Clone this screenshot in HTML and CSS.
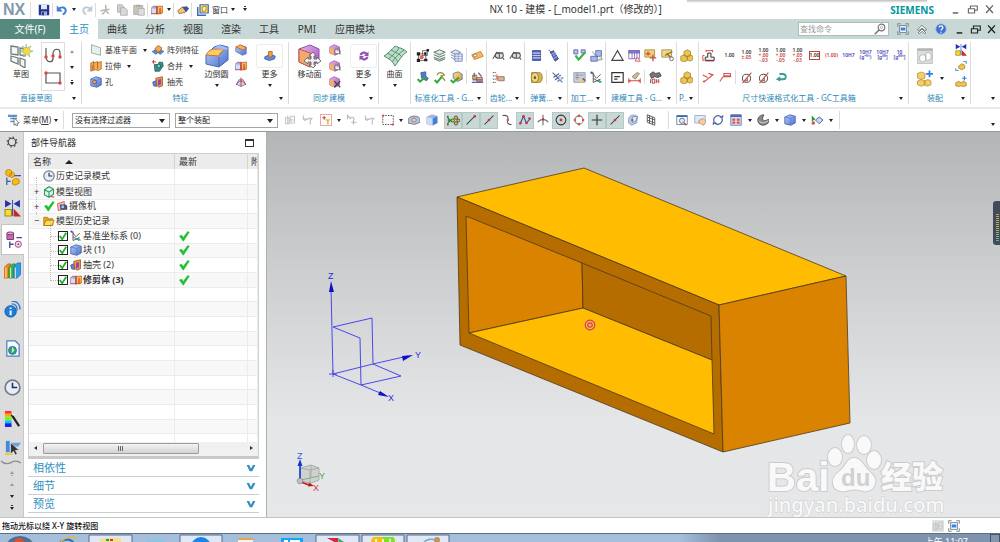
FILE: index.html
```html
<!DOCTYPE html>
<html lang="zh-CN">
<head>
<meta charset="utf-8">
<title>NX 10 - 建模</title>
<link rel="stylesheet" href="styles.css">
</head>
<body>
<svg class="sprite" aria-hidden="true">
  <defs>
    <linearGradient id="gb" x1="0" y1="0" x2="1" y2="1"><stop offset="0" stop-color="#b9d0f7"/><stop offset="1" stop-color="#4a6fd0"/></linearGradient>
    <linearGradient id="go" x1="0" y1="0" x2="1" y2="1"><stop offset="0" stop-color="#ffe08a"/><stop offset="1" stop-color="#e2902a"/></linearGradient>
    <linearGradient id="gp" x1="0" y1="0" x2="1" y2="1"><stop offset="0" stop-color="#e4b8ee"/><stop offset="1" stop-color="#a54fc0"/></linearGradient>
  </defs>
  <symbol id="save" viewBox="0 0 16 16"><path d="M1 1h13l1 1v13H1z" fill="#27348b"/><path d="M4 1h8v6H4z" fill="#dfe9f8"/><path d="M4 10h8v5H4z" fill="#9db4df"/><path d="M5 11h3v4H5z" fill="#27348b"/></symbol>
  <symbol id="undo" viewBox="0 0 16 16"><path d="M3 7c4-4 10-3 10 2 0 3-2 4-4 5" fill="none" stroke="#3f7fd0" stroke-width="2.6"/><path d="M1 2v8h8z" fill="#3f7fd0"/></symbol>
  <symbol id="redo" viewBox="0 0 16 16"><path d="M13 7C9 3 3 4 3 9c0 3 2 4 4 5" fill="none" stroke="#bccbd6" stroke-width="2.4"/><path d="M15 2v8H7z" fill="#bccbd6"/></symbol>
  <symbol id="cut" viewBox="0 0 16 16"><path d="M9 1v9M2 9l12-2M8 10l-4 4M9 9l4 4" fill="none" stroke="#b9b6ae" stroke-width="2"/></symbol>
  <symbol id="copy" viewBox="0 0 16 16"><path d="M2 1h6l2 2v8H2z" fill="#cfcfd2" stroke="#aaa"/><path d="M6 5h6l3 3v7H6z" fill="#d9d9dc" stroke="#a5a5a8"/></symbol>
  <symbol id="paste" viewBox="0 0 16 16"><path d="M1 2h12v12H1z" fill="#c9c4b6" stroke="#aaa698"/><path d="M4 1h6v3H4z" fill="#aaa"/><path d="M7 6h8v9H7z" fill="#ddd" stroke="#aaa"/></symbol>
  <symbol id="trim" viewBox="0 0 16 16"><path d="M0 6l3-3h6v10H0z" fill="url(#gb)" stroke="#d2453a"/><path d="M1 6h6v6H1z" fill="#cfe0fb"/><path d="M8 6l2-3h6v8l-2 2H8z" fill="url(#go)" stroke="#b05a1e"/><path d="M8 3v11M12 5v8" stroke="#d22a1e" stroke-width="1.300" fill="none"/></symbol>
  <symbol id="touch" viewBox="0 0 16 16"><path d="M1 9l6-5 8 2-4 5-8 2z" fill="#f4c27e" stroke="#8c5a2a"/><path d="M7 4l6-1 3 3-4 5z" fill="#3e5695"/></symbol>
  <symbol id="win" viewBox="0 0 16 16"><path d="M1 4v11h11" fill="none" stroke="#456ab5" stroke-width="2"/><path d="M4 1h11v11H4z" fill="#f6dc62" stroke="#3b6dca" stroke-width="1.6"/><path d="M7 4l5-1v6l-5 1z" fill="#fff3b2" stroke="#a67711"/></symbol>
  <symbol id="min" viewBox="0 0 16 16"><path d="M4 13h8" stroke="currentColor" stroke-width="2.2"/></symbol>
  <symbol id="res" viewBox="0 0 16 16"><path d="M5 7V3h10v6h-4M2 7h9v6H2z" fill="none" stroke="currentColor" stroke-width="1.6"/></symbol>
  <symbol id="cls" viewBox="0 0 16 16"><path d="M3 2l10 11M13 2L3 13" stroke="currentColor" stroke-width="2"/></symbol>
  <symbol id="mag" viewBox="0 0 16 16"><circle cx="10" cy="6" r="4.4" fill="none" stroke="#777" stroke-width="1.6"/><circle cx="10" cy="6" r="1.6" fill="none" stroke="#999"/><path d="M7 9l-6 6" stroke="#777" stroke-width="2.2"/></symbol>
  <symbol id="full" viewBox="0 0 16 16"><path d="M1 5V1h4M11 1h4v4M15 11v4h-4M5 15H1v-4" fill="none" stroke="#808a90" stroke-width="1.4"/><path d="M3.500 3.500h9v9h-9z" fill="#fff" stroke="#52606b"/><path d="M5 6h6v4H5z" fill="#2d83e6"/></symbol>
  <symbol id="up" viewBox="0 0 16 16"><path d="M2 9l6-6 6 6-2 1-4-3-4 3zM3 13l5-5 5 5-2 1-3-3-3 3z" fill="#fff" stroke="#555"/></symbol>
  <symbol id="help" viewBox="0 0 16 16"><circle cx="8" cy="8" r="7" fill="#3f70cf" stroke="#a9bde7"/><path d="M5.500 6c0-3 5-3 5 0 0 2-2.500 2-2.500 4M8 11.500v1.500" fill="none" stroke="#fff" stroke-width="1.700"/></symbol>
  <symbol id="sketch" viewBox="0 0 24 24"><path d="M2 2l7 1v8l-7-1zM11 4l5 1v7l-5-1zM2 12l7 2v6l-7-3zM11 14l5 2v8l-5-3z" fill="#f4f6f6" stroke="#707a7a" stroke-width="1.300"/><path d="M17 0l1 4 4-2-2 4 4 1-4 2 1 4-4-3-3 3 1-4-4-2 4-1-2-4 4 2z" fill="#f8d93a" stroke="#6fa6a0" stroke-width=".5"/></symbol>
  <symbol id="prof" viewBox="0 0 18 18"><path d="M2 2v8c0 7 6 7 7 3V7c1-5 7-5 7 0v4" fill="none" stroke="#555" stroke-width="1.200"/><g fill="#e04545"><circle cx="2" cy="11" r="1.700"/><circle cx="9" cy="10" r="1.700"/><circle cx="16" cy="11" r="1.700"/></g></symbol>
  <symbol id="rect" viewBox="0 0 18 18"><path d="M2 4h14v10H2z" fill="none" stroke="#555" stroke-width="1.200"/><circle cx="2" cy="4" r="1.700" fill="#e04545"/><circle cx="16" cy="14" r="1.700" fill="#e04545"/></symbol>
  <symbol id="plane" viewBox="0 0 16 16"><path d="M2 1l12 4v10L2 12z" fill="#e6efe9" stroke="#8a9a95"/></symbol>
  <symbol id="extr" viewBox="0 0 16 16"><path d="M1 4l4-2v2l5-2v2l5-2v10l-4 2-4-1-6 2z" fill="#f3b04c" stroke="#a5602a"/><path d="M5 3v10M10 3v9M3 7v6" stroke="#b34b36" fill="none"/></symbol>
  <symbol id="cube" viewBox="0 0 16 16"><path d="M1 4l7-3 7 2v9l-6 3-8-2z" fill="url(#gb)" stroke="#3c58aa"/><path d="M1 4l8 2 6-3M9 6v9" stroke="#5a7ad0" fill="none"/></symbol>
  <symbol id="hole" viewBox="0 0 16 16"><use href="#cube"/><circle cx="6" cy="8" r="2.600" fill="#f3a64c" stroke="#4d3f82"/></symbol>
  <symbol id="patt" viewBox="0 0 16 16"><path d="M0 10l5-3 5 3-5 4zM6 10l5-3 5 3-5 4z" fill="#5d86d8" stroke="#395a9e" stroke-width=".6"/><path d="M4 6l4-4 5 3-2 5-4 1z" fill="#f3a745" stroke="#9e5a22"/></symbol>
  <symbol id="unite" viewBox="0 0 16 16"><path d="M3 6h6V3h5l1 5-5 7H4z" fill="#3d8d86" stroke="#1e5f5b"/><circle cx="9" cy="8" r="2.600" fill="#7cc8bf" stroke="#17504c"/><path d="M2 0v5M0 2.500h5" stroke="#d84d46" stroke-width="1.500"/></symbol>
  <symbol id="shell" viewBox="0 0 16 16"><path d="M1 8l5-2v8l-4-1z" fill="#5d86d8" stroke="#34529c"/><path d="M5 3l9-2v12l-5 2-3-3z" fill="#f19a45" stroke="#9b4a22"/><path d="M8 5l4-1v7l-4 2z" fill="#8d4bb0"/></symbol>
  <symbol id="edge" viewBox="0 0 24 24"><path d="M1 11l8-8 6-2 8 2v13l-9 7-13-3z" fill="url(#gb)" stroke="#4a68b5"/><path d="M1 11c2-4 5-6 9-6l12 0c-4 1-7 3-8 7z" fill="#f6cf5e" stroke="#d86d3c"/><path d="M9 4l5-3 9 3-1 2z" fill="#9dbbf4"/><path d="M14 13v10" stroke="#4a68b5"/></symbol>
  <symbol id="chamf" viewBox="0 0 16 16"><path d="M1 5l7-3 7 2v9l-5 2-9-5z" fill="url(#gb)" stroke="#6473b8"/><path d="M1 4l6-3 8 4-4 3z" fill="#f4b552" stroke="#c84f33"/></symbol>
  <symbol id="draft" viewBox="0 0 16 16"><path d="M2 11l3-6h6l3 6-6 3z" fill="#cad8f2" stroke="#5570b3"/><path d="M8 2v12M2 12c2-7 10-7 12 0" fill="none" stroke="#d23b31" stroke-width="1.300"/></symbol>
  <symbol id="more" viewBox="0 0 16 16"><path d="M1 9l7-3 7 2-1 4-7 2-6-2z" fill="#5d8ae0" stroke="#3858a5"/><path d="M6 2h5v6l-3 2-2-2z" fill="#f0a140" stroke="#ad5b1d"/></symbol>
  <symbol id="move" viewBox="0 0 24 24"><path d="M1 5l11-4 9 4v12l-9 6-11-5z" fill="url(#gp)" stroke="#9050a5"/><path d="M1 5l11 4v14L1 18z" fill="#f3a96b" stroke="#c45a48"/><path d="M15 8l3 4h-2v3h3v-2l4 4-4 3v-2h-3v3h2l-3 3-4-3h2v-3h-3v2l-4-3 4-4v2h3v-3h-2z" fill="#f1f2f1" stroke="#626666" stroke-width=".9"/></symbol>
  <symbol id="syn" viewBox="0 0 16 16"><path d="M1 4l6-3 7 3v8l-6 3-7-3z" fill="url(#gp)" stroke="#a55ca9"/><path d="M1 4l6 3v8l-6-3z" fill="#f0b070"/><path d="M8 7h6v6H8z" fill="#fff" stroke="#555"/><path d="M10 9h5v5" fill="none" stroke="#777"/></symbol>
  <symbol id="syn2" viewBox="0 0 16 16"><path d="M1 4l6-3 7 3v8l-6 3-7-3z" fill="url(#gp)" stroke="#a55ca9"/><path d="M1 4l6 3v8l-6-3z" fill="#f0b070"/><path d="M7 7l8 8M15 7l-8 8" stroke="#444" stroke-width="1.500"/></symbol>
  <symbol id="cyc" viewBox="0 0 16 16"><path d="M2 7c1-6 8-6 10-3l2-2v6H8l2-2C8 4 6 5 5 7zM14 9c-1 6-8 6-10 3l-2 2V8h6l-2 2c2 2 4 1 5-1z" fill="#9254b0"/></symbol>
  <symbol id="surf" viewBox="0 0 24 24"><path d="M1 12C6 9 9 5 12 2c4 2 8 2 12 6-4 2-7 7-12 14-2-5-6-7-11-10z" fill="#b9dec8" stroke="#588a70"/><path d="M4 9c5 2 9 5 11 9M8 6c4 2 9 4 11 7M5 15c4-3 9-7 11-11M9 18c3-4 7-9 12-12" fill="none" stroke="#588a70" stroke-width=".9"/></symbol>
  <symbol id="nodes" viewBox="0 0 16 16"><path d="M3 6h9v8H3zM8 2h6v6H8z" fill="none" stroke="#555"/><g fill="#222"><path d="M1 4h4v4H1zM10 4h3v3h-3zM1 12h4v4H1zM10 12h4v3h-4zM13 0h3v3h-3z"/></g><circle cx="7" cy="10" r="2.500" fill="#e8654b"/></symbol>
  <symbol id="layers" viewBox="0 0 16 16"><path d="M1 4l7-3 7 3-7 3zM1 7l7 3 7-3M1 10l7 3 7-3M1 12l7 3 7-3" fill="#dcebe2" stroke="#5f7468" stroke-width="1.200"/></symbol>
  <symbol id="sheet" viewBox="0 0 16 16"><path d="M1 4l6-3 6 3-6 3zM1 7l6 3M1 10l5 3" fill="#dbe6ee" stroke="#65778e"/><path d="M6 6h9v9H6z" fill="#e9effb" stroke="#6277ba"/><path d="M6 9h9M6 12h9M10 6v9" stroke="#8a9cd0"/></symbol>
  <symbol id="tag" viewBox="0 0 16 16"><path d="M1 7l11-4 3 6-11 4z" fill="#f5b85b" stroke="#c27528"/><circle cx="5" cy="8" r="1.800" fill="#fff" stroke="#777"/></symbol>
  <symbol id="chk3" viewBox="0 0 16 16"><path d="M6 2l6-1v5l3 3-2 3-6-3z" fill="#4e79d1" stroke="#34569c"/><path d="M2 10l3 3 7-6" fill="none" stroke="#35aa3e" stroke-width="2.600"/></symbol>
  <symbol id="chk4" viewBox="0 0 16 16"><path d="M5 5c2-5 7-3 9 0l-4 1 5 6" fill="none" stroke="#9a9030" stroke-width="1.500"/><path d="M2 11l3 3 6-7" fill="none" stroke="#35aa3e" stroke-width="2.600"/></symbol>
  <symbol id="chk5" viewBox="0 0 16 16"><path d="M4 3l6-2 5 3v6l-6 3-5-4z" fill="url(#go)" stroke="#4c6fb8"/><path d="M1 11l3 3 7-6" fill="none" stroke="#35aa3e" stroke-width="2.600"/></symbol>
  <symbol id="stamp" viewBox="0 0 16 16"><path d="M2 5h5v5H2zM7 8h7v5H7z" fill="#f0b04d" stroke="#8b6a48"/><path d="M4 2v5M9 2l4 5M1 14h14M2 11h12" stroke="#6a5bb0" stroke-width="1.600"/></symbol>
  <symbol id="gear" viewBox="0 0 16 16"><ellipse cx="9" cy="8" rx="5" ry="3.500" fill="#ddd" stroke="#555" stroke-width="1.300"/><path d="M1 12l5-8 3 2M5 5h9M13 11l2 2M9 6v5" stroke="#555" fill="none" stroke-width="1.300"/></symbol>
  <symbol id="gearl" viewBox="0 0 16 16"><path d="M1 2h4M1 6h4M1 10h4M1 14h4" stroke="#333" stroke-dasharray="2 1"/><path d="M6 7h9v5H8z" fill="#d7b592" stroke="#896b59"/><path d="M6 4v8" stroke="#d44"/></symbol>
  <symbol id="spr" viewBox="0 0 16 16"><path d="M3 2h10v12H3z" fill="#5264bf" stroke="#303c80"/><path d="M3 5h10M3 8h10M3 11h10" stroke="#c2c9f1" stroke-width="1.500"/></symbol>
  <symbol id="spr2" viewBox="0 0 16 16"><path d="M2 1l3 3" stroke="#333"/><path d="M4 4l4-2 6 10-4 3z" fill="#5665ba" stroke="#303c80"/><path d="M5 7l5-3M7 9l4-3M8 12l5-3" stroke="#c2c9f1"/></symbol>
  <symbol id="disc" viewBox="0 0 16 16"><path d="M2 2h10c4 1 4 11 0 12H2z" fill="#d9b84a" stroke="#92731b"/><ellipse cx="6" cy="8" rx="4.500" ry="6" fill="#ecd787" stroke="#92731b"/><ellipse cx="6" cy="8" rx="1.500" ry="2" fill="#6f5b22"/></symbol>
  <symbol id="spr3" viewBox="0 0 16 16"><path d="M2 2l12 12M3 8l7-5M5 11l7-6M8 13l7-5" stroke="#5a6ba5" stroke-width="1.500"/><path d="M9 6l5 2-3 4z" fill="#d9d9ef"/></symbol>
  <symbol id="v" viewBox="0 0 16 16"><path d="M1 1h5v5H1zM10 1h5v4h-5z" fill="#b8c0ec" stroke="#5360b5"/><path d="M3 8l4 5 8-9" fill="none" stroke="#3ab24a" stroke-width="2.600"/></symbol>
  <symbol id="cfg" viewBox="0 0 16 16"><path d="M7 2h7v7H7zM1 9h8v6H1z" fill="#aab8e8" stroke="#5161aa"/><path d="M3 3l4 6M13 8l2 5-6 1" stroke="#888" fill="#dedede"/></symbol>
  <symbol id="map" viewBox="0 0 16 16"><path d="M1 2h14v12H1z" fill="#c8cede" stroke="#939bab"/><path d="M3 5h10M3 8h5M5 2v9" stroke="#8791a5"/><path d="M8 8l6 1-2 5-6-1z" fill="#e9cc7c"/><path d="M12 9l3 3" stroke="#5a57c5" stroke-width="2"/></symbol>
  <symbol id="csys" viewBox="0 0 16 16"><path d="M4 14V2M4 14l9-4M4 9l8 5M3 3l5 6 5-5" fill="none" stroke="#555" stroke-width="1.200"/><path d="M10 11l4 3" stroke="#2a9" stroke-width="2"/><circle cx="2" cy="2" r="1.500" fill="#44c"/></symbol>
  <symbol id="tri" viewBox="0 0 16 16"><path d="M8 2l7 12H1z" fill="none" stroke="#444" stroke-width="1.300"/></symbol>
  <symbol id="tbl" viewBox="0 0 16 16"><path d="M1 2h13v10H1z" fill="#fff" stroke="#7260b8"/><path d="M1 2h13v3H1zM5 5v7M8 5v7M11 5v7" fill="#8d78ca" stroke="#7260b8"/><path d="M11 10l4 5H9z" fill="#fff" stroke="#d44"/></symbol>
  <symbol id="note" viewBox="0 0 16 16"><path d="M1 1h12v9H1z" fill="#f0d077" stroke="#a38842"/><path d="M5 3v5M2 6h6M11 7v8M7 11h8" stroke="#c94e3c" stroke-width="1.600"/></symbol>
  <symbol id="note2" viewBox="0 0 16 16"><path d="M1 1h12v9H1z" fill="#efd887" stroke="#a38842"/><path d="M5 8l9-5M7 5l6 7" stroke="#876e36" stroke-width="1.500"/><circle cx="13" cy="12" r="2.300" fill="#fff" stroke="#555"/></symbol>
  <symbol id="box" viewBox="0 0 16 16"><path d="M1 2h14v12H1z" fill="none" stroke="#333" stroke-width="1.400"/><path d="M4 7h7M4 10h4" stroke="#333" stroke-width="1.500"/></symbol>
  <symbol id="dimx" viewBox="0 0 16 16"><path d="M1 9v6M15 9v6M1 12h14M3 11l-2 1 2 1M13 11l2 1-2 1" fill="none" stroke="#d0453f" stroke-width="1.200"/><path d="M5 7l6-5 3 1-5 7z" fill="#d7c275" stroke="#777"/></symbol>
  <symbol id="h7" viewBox="0 0 16 16"><path d="M1 4l4-3 3 2 5-1 2 4-4 2-4-1-4 2z" fill="#777" stroke="#444"/><path d="M2 10v5M4 10h3v5H4zM9 10v5M12 10v5M9 12.500h3" stroke="#b04543" fill="none" stroke-width="1.200"/></symbol>
  <symbol id="gold" viewBox="0 0 16 16"><path d="M5 3l4-2 4 2v5l-4 2-4-2zM1 9l4-2 4 2v5l-4 2-4-2zM9 9l3-2 4 2v4l-4 2-3-2z" fill="#edc652" stroke="#ab842b"/></symbol>
  <symbol id="addc" viewBox="0 0 24 24"><path d="M2 6l5-2 5 2v6l-5 2-5-2zM2 16l5-2 5 2v5l-5 2-5-2zM11 16l5-2 4 2v5l-5 2-4-2z" fill="#f2cf67" stroke="#b68e33"/><path d="M18 2v9M13.500 6.500h9" stroke="#2f7be0" stroke-width="2.300"/></symbol>
  <symbol id="fade" viewBox="0 0 24 24"><path d="M2 2h20v20H2z" fill="#dcdedd" stroke="#b6baba"/><path d="M2 4h20" stroke="#aaa" stroke-width="2"/><path d="M5 12l4-2 4 2v6l-4 2-4-2zM13 9l3-2 4 2v7l-4 2-3-1z" fill="#fff" stroke="#a5a9a9"/></symbol>
  <symbol id="mirr" viewBox="0 0 16 16"><path d="M1 0l6 3.500L1 7zM15 0L9 3.500 15 7z" fill="#2733a8"/><path d="M1 9h6v6H1z" fill="#f4dd35" stroke="#9f8b12"/><path d="M9 8l7 7.500H9z" fill="#c92b22"/><path d="M8 0v15" stroke="#2b5bbd"/></symbol>
  <symbol id="gmov" viewBox="0 0 16 16"><path d="M5 8l4-3 4 2v4l-4 2-4-2z" fill="#efc350" stroke="#a67f26"/><path d="M11 2h4v3M1 11v3h4" fill="none" stroke="#5c93e5" stroke-width="1.500"/></symbol>
  <symbol id="gadd" viewBox="0 0 16 16"><path d="M1 9l4-2 3 2 3-2 4 2v4l-4 1-3-1-3 1-4-1z" fill="#efc350" stroke="#a67f26"/><path d="M12.500 0v6M9.500 3h6" stroke="#2f7be0" stroke-width="1.500"/></symbol>
  <symbol id="dstep" viewBox="0 0 16 16"><path d="M7 5h4v5h4v4H4v-4h3z" fill="#eee" stroke="#333" stroke-width="1.200"/><path d="M5 1v3M13 1v3M5 2h8M1 8v6M1 8h2M1 14h2M4 16h11" stroke="#d44" stroke-width="1.200"/></symbol>
  <symbol id="dred" viewBox="0 0 16 16"><path d="M2 14L14 4M1 5l6 3M8 3l6 2M4 12l-3 1" stroke="#cf5750" stroke-width="1.500"/></symbol>
  <symbol id="dred2" viewBox="0 0 16 16"><path d="M1 13l4-6h10M6 3h8v3H6z" fill="none" stroke="#cf5750" stroke-width="1.300"/></symbol>
  <symbol id="dia" viewBox="0 0 16 16"><circle cx="8" cy="9" r="5" fill="none" stroke="#444" stroke-width="1.200"/><path d="M3 15L14 2M5 12h4v-3" stroke="#c54848" stroke-width="1.300" fill="none"/></symbol>
  <symbol id="ret" viewBox="0 0 16 16"><path d="M6 4h5c5 1 4 7 0 7H6" fill="none" stroke="#3e9b93" stroke-width="2.400"/><path d="M7 7v7l-6-3z" fill="#3e9b93"/></symbol>
  <symbol id="menu" viewBox="0 0 16 16"><path d="M0 1h12v3H0zM3 5h9v2H3zM3 9h6v2H3z" fill="#5e90d0"/><path d="M8 5l7 7-3 .5 1 3-2 .5-1-3-2 2z" fill="#fff" stroke="#555"/></symbol>
  <symbol id="gh1" viewBox="0 0 16 16"><path d="M2 5h5v8H2zM5 2v12M9 3h5v9H9zM7 8h6" fill="none" stroke="#c4c8c8" stroke-width="1.500"/></symbol>
  <symbol id="gh2" viewBox="0 0 16 16"><path d="M2 2v5h6M8 6l5 0-2 3v5M3 9l3-2" fill="none" stroke="#bfc4c4" stroke-width="1.700"/></symbol>
  <symbol id="flt" viewBox="0 0 16 16"><path d="M0.500 0.500h15v15H.5z" fill="#fff" stroke="#e07a73"/><path d="M3 5h5M5.500 2.500v5" stroke="#d4463f" stroke-width="1.500"/><path d="M7 7h7l-2.500 3v4h-2v-4z" fill="#e9b74a"/></symbol>
  <symbol id="gh3" viewBox="0 0 16 16"><path d="M2 7V2l4 4c3-4 6 0 4 3M10 8v6M7 11h7" fill="none" stroke="#b7bcbc" stroke-width="1.600"/></symbol>
  <symbol id="dash" viewBox="0 0 16 16"><path d="M1 2h14v12H1z" fill="none" stroke="#444" stroke-dasharray="2 1.500" stroke-width="1.200"/><circle cx="1.500" cy="2" r="1.500" fill="#d44"/><circle cx="14.500" cy="14" r="1.500" fill="#d44"/></symbol>
  <symbol id="shade" viewBox="0 0 16 16"><path d="M0 8c1-6 12-7 16-2v5l-7 3-9-2z" fill="#b9c1d5" stroke="#59657e"/><ellipse cx="8" cy="8" rx="3" ry="2.500" fill="#e6d0d0" stroke="#906a6a"/></symbol>
  <symbol id="bcube" viewBox="0 0 16 16"><path d="M1 4l7-3 7 2v9l-6 3-8-2z" fill="#8bbcf3" stroke="#e48a93" stroke-width=".8"/><path d="M1 4l8 2v9l-8-2z" fill="#c3dffb"/><path d="M9 6l6-3v9l-6 3z" fill="#4281db"/></symbol>
  <symbol id="snap" viewBox="0 0 16 16"><path d="M0 2h2v3H0zM0 11h2v3H0z" fill="#d33"/><path d="M1 4l5 4-5 4z" fill="#19a03a"/><g fill="#e8cf3c" stroke="#333" stroke-width="1"><circle cx="7" cy="8" r="2"/><circle cx="11" cy="4.500" r="2"/><circle cx="11" cy="11.500" r="2"/><circle cx="14" cy="8" r="1.700"/></g></symbol>
  <symbol id="ln1" viewBox="0 0 16 16"><path d="M2 14L13 3" stroke="#333" stroke-width="1.400"/><circle cx="13" cy="3" r="1.800" fill="#c33"/></symbol>
  <symbol id="ln2" viewBox="0 0 16 16"><path d="M2 14L14 2" stroke="#333" stroke-width="1.400"/><circle cx="8" cy="8" r="1.800" fill="#c33"/></symbol>
  <symbol id="crv" viewBox="0 0 16 16"><path d="M2 2c7-1 8 2 7 6s0 6 5 6" fill="none" stroke="#555" stroke-width="1.400"/><circle cx="9" cy="8" r="1.600" fill="#c55"/></symbol>
  <symbol id="zig" viewBox="0 0 16 16"><path d="M1 14l5-11 4 9 5-6" fill="none" stroke="#4542a5" stroke-width="1.500"/><g fill="#c33"><circle cx="2" cy="12" r="1.800"/><circle cx="6" cy="3" r="1.800"/><circle cx="10" cy="12" r="1.800"/><circle cx="14" cy="6" r="1.800"/></g></symbol>
  <symbol id="int" viewBox="0 0 16 16"><path d="M8 1v14M1 11c3-5 11-5 14 0" fill="none" stroke="#666" stroke-width="1.400"/><circle cx="8" cy="7" r="1.600" fill="#c33"/></symbol>
  <symbol id="cen" viewBox="0 0 16 16"><circle cx="8" cy="8" r="6.500" fill="none" stroke="#333" stroke-width="1.400"/><circle cx="8" cy="8" r="1.900" fill="#c33"/></symbol>
  <symbol id="quad" viewBox="0 0 16 16"><circle cx="8" cy="8" r="5.500" fill="none" stroke="#888" stroke-width="1.400"/><g fill="#d35454"><circle cx="8" cy="2.500" r="1.700"/><circle cx="8" cy="13.500" r="1.700"/><circle cx="2.500" cy="8" r="1.700"/><circle cx="13.500" cy="8" r="1.700"/></g></symbol>
  <symbol id="plus" viewBox="0 0 16 16"><path d="M8 1v14M1 8h14" stroke="#333" stroke-width="1.500"/></symbol>
  <symbol id="ball" viewBox="0 0 16 16"><path d="M2 7c1-7 10-7 12-3l-1 8-7 3-4-3z" fill="#b2cdf0" stroke="#7895c0"/><path d="M7 4l7-1-3 7-4 1z" fill="#e7eef9" stroke="#6a7da5"/><circle cx="7" cy="8" r="1.500" fill="#c33"/></symbol>
  <symbol id="grid" viewBox="0 0 16 16"><path d="M3 1l10 4v10L3 11zM6 2v11M10 4v10M3 4l10 4M3 8l10 4" fill="none" stroke="#555" stroke-width="1.200"/></symbol>
  <symbol id="fit" viewBox="0 0 16 16"><path d="M1 2h14v12H1z" fill="#fff" stroke="#4a69ae"/><path d="M1 2h14v2H1z" fill="#3f66b4"/><circle cx="8" cy="9" r="3.500" fill="#d8e6fb" stroke="#555"/><path d="M11 12l3 3" stroke="#b45d35" stroke-width="2"/></symbol>
  <symbol id="hand" viewBox="0 0 16 16"><path d="M1 2h14v10H1z" fill="#dee9f9" stroke="#8da0c8"/><path d="M6 9l6-3 4 4-3 5-6-3z" fill="#f4cda2" stroke="#bb8a58"/></symbol>
  <symbol id="rot" viewBox="0 0 16 16"><path d="M3 11C0 4 8 0 12 4M13 5c3 7-5 11-9 7" fill="none" stroke="#4c61a8" stroke-width="1.600"/><path d="M10 5h5V1zM6 11H1v4z" fill="#4c61a8"/></symbol>
  <symbol id="lay" viewBox="0 0 16 16"><path d="M1 1h14v14H1z" fill="#d9e2f5" stroke="#4a69ae"/><path d="M1 1h14v3H1z" fill="#4a69ae"/><path d="M3 6h4v3H3zM9 6h4v3H9zM3 10h4v3H3zM9 10h4v3H9z" fill="#dc5a4e"/></symbol>
  <symbol id="wing" viewBox="0 0 16 16"><path d="M1 8c0-4 4-7 8-7L7 7l3 2 6-2v3c-1 3-5 5-8 5-4 0-7-3-7-7z" fill="#888" stroke="#444"/><path d="M3 9c1 3 6 4 12 0" fill="none" stroke="#ddd" stroke-width="1.200"/></symbol>
  <symbol id="play" viewBox="0 0 16 16"><path d="M1 2l5 5-5 3z" fill="#1e9d45"/><path d="M1 10h4v4H1z" fill="#d44"/><path d="M6 8l5-4 5 4-5 5z" fill="#cfd6f0" stroke="#5664a5" stroke-width="1.300"/></symbol>
  <symbol id="cog" viewBox="0 0 16 16"><circle cx="8" cy="8" r="5" fill="none" stroke="#444" stroke-width="1.600"/><circle cx="8" cy="8" r="6.500" fill="none" stroke="#444" stroke-width="1.500" stroke-dasharray="2 3.100"/></symbol>
  <symbol id="asm" viewBox="0 0 18 18"><path d="M2 2l3-2 3 2v4L5 8 2 6zM6 5l3-2 2 2v3L8 9 6 8zM9 12l3-2 4 1v4l-4 2-3-1z" fill="#f8bb18" stroke="#c28908"/><path d="M3 9v8M3 13h4M11 7h7" stroke="#3f55a5" stroke-width="1.300"/></symbol>
  <symbol id="nav" viewBox="0 0 18 18"><path d="M1 2h7v7H1z" fill="#c06aae" stroke="#7e3474"/><ellipse cx="4.500" cy="2.500" rx="3.500" ry="1.500" fill="#e3a9d8" stroke="#7e3474"/><path d="M11 7h6M4 11v7M4 14h4" stroke="#4b4b9b" stroke-width="1.400"/><circle cx="13" cy="14" r="3.300" fill="#f4dcee" stroke="#9c4080"/><circle cx="13" cy="14" r="1" fill="#9c4080"/></symbol>
  <symbol id="books" viewBox="0 0 18 18"><path d="M0 6l4-4h3v11l-3 4H0z" fill="#f08a1b" stroke="#a95a0e" stroke-width=".7"/><path d="M5 6l4-4h3v11l-3 4H5z" fill="#36b64c" stroke="#1b7c2c" stroke-width=".7"/><path d="M10 6l4-5h4v12l-4 4h-4z" fill="#2f9be0" stroke="#1c669b" stroke-width=".7"/><path d="M2 6v11M7 6v11M12 6v11" stroke="#ffe9b5"/></symbol>
  <symbol id="info" viewBox="0 0 18 18"><circle cx="7" cy="11" r="6" fill="#1c7fda" stroke="#0e56a0"/><path d="M7 10v5M7 7v1.500" stroke="#fff" stroke-width="2"/><path d="M8 3c4 0 6 3 6 7M8 0c6 0 9 4 9 9" fill="none" stroke="#3575c8" stroke-width="1.500"/></symbol>
  <symbol id="html" viewBox="0 0 18 18"><path d="M3 1h9l4 4v12H3z" fill="#f7faff" stroke="#4e7fc6" stroke-width="1.300"/><circle cx="9" cy="11" r="4.200" fill="#39a94a" stroke="#1d70c1"/><path d="M9 7l2 4-3 3z" fill="#bfe6ff"/></symbol>
  <symbol id="clock" viewBox="0 0 18 18"><circle cx="9" cy="9" r="7.800" fill="#e6eefb" stroke="#777e88" stroke-width="1.800"/><path d="M9 4v5h5" stroke="#26324d" fill="none" stroke-width="1.700"/></symbol>
  <symbol id="rain" viewBox="0 0 18 18"><path d="M1 1h7v3H1z" fill="#f33"/><path d="M1 4h7v3H1z" fill="#fa0"/><path d="M1 7h7v4H1z" fill="#8e2"/><path d="M1 11h7v3H1z" fill="#0cf"/><path d="M1 14h7v4H1z" fill="#22d"/><path d="M8 5l8 12" stroke="#222" stroke-width="2.400"/><path d="M8 0l1 4 3 1-3 1" fill="#fff"/></symbol>
  <symbol id="role" viewBox="0 0 18 18"><path d="M2 2h4v12H2z" fill="#3d8bdc"/><path d="M7 4h11l-3 4H8z" fill="#6aa4e6"/><path d="M1 16h8" stroke="#e9c93a" stroke-width="2"/><path d="M7 4v12l3-3 2 4 2-1-2-4h4z" fill="#333" stroke="#fff" stroke-width=".5"/></symbol>
  <symbol id="views" viewBox="0 0 16 16"><path d="M2 5l6-4 6 3v7l-6 4-6-3zM2 5l6 3 6-4M8 8v7" fill="#dff4ea" stroke="#2a9e6b" stroke-width="1.500"/><path d="M10 14l5 1" stroke="#c44" stroke-width="1.500"/></symbol>
  <symbol id="cam" viewBox="0 0 16 16"><path d="M2 5l9-3v10l-8 2z" fill="#f6c9c4" stroke="#c43a32"/><path d="M5 6h8l2 2v5H6z" fill="#43507a"/><circle cx="9" cy="9" r="2" fill="#a7c3ee"/></symbol>
  <symbol id="fold" viewBox="0 0 16 16"><path d="M1 3h5l1 2h6v9H1z" fill="#e9a91c" stroke="#a87207"/><path d="M4 7h11l-3 7H1z" fill="#ffd95a" stroke="#a87207"/></symbol>
  <symbol id="tick" viewBox="0 0 16 16"><path d="M2 8l3-1 2 3 6-8 2 1-8 12z" fill="#1fbf2f" stroke="#1fbf2f" stroke-width=".8"/></symbol>
  <symbol id="chev" viewBox="0 0 16 16"><path d="M1 3h4l3 6 3-6h4l-5 10H6z" fill="#2f8fc0"/></symbol>
</svg>

<header class="titlebar">
  <span class="logo">NX</span>
  <div class="quick">
    <button aria-label="保存"><svg class="i12"><use href="#save"/></svg></button><span class="vs"></span>
    <button aria-label="撤消"><svg class="i12"><use href="#undo"/></svg></button><button class="dd" aria-label="撤消列表"><i class="dn"></i></button>
    <button aria-label="重做"><svg class="i12"><use href="#redo"/></svg></button><span class="vs"></span>
    <button aria-label="剪切"><svg class="i12"><use href="#cut"/></svg></button>
    <button aria-label="复制"><svg class="i12"><use href="#copy"/></svg></button>
    <button aria-label="粘贴"><svg class="i12"><use href="#paste"/></svg></button><span class="vs"></span>
    <button aria-label="修剪体"><svg class="i12"><use href="#trim"/></svg></button><button class="dd" aria-label="重复命令"><i class="dn"></i></button><span class="vs"></span>
    <button aria-label="触控模式"><svg class="i12"><use href="#touch"/></svg></button><span class="vs"></span>
    <button class="wide"><svg class="i12"><use href="#win"/></svg>窗口<i class="dn"></i></button><button class="dd" aria-label="工具条选项"><i class="dn bar"></i></button>
  </div>
  <h1>NX 10 - 建模 - [_model1.prt（修改的）]</h1>
  <span class="brand">SIEMENS</span>
  <div class="wc">
    <button aria-label="最小化"><svg class="i12"><use href="#min"/></svg></button><button aria-label="还原"><svg class="i12"><use href="#res"/></svg></button><button aria-label="关闭"><svg class="i12"><use href="#cls"/></svg></button>
  </div>
</header>

<nav class="tabs">
  <button class="file">文件(F)</button>
  <button class="on">主页</button><button>曲线</button><button>分析</button><button>视图</button><button>渲染</button><button>工具</button><button>PMI</button><button class="long">应用模块</button>
  <label class="search"><input type="text" placeholder="查找命令" aria-label="查找命令"><svg class="i12"><use href="#mag"/></svg></label>
  <div class="tools">
    <button aria-label="全屏"><svg class="i12"><use href="#full"/></svg></button><button aria-label="最小化功能区"><svg class="i12"><use href="#up"/></svg></button><button aria-label="帮助"><svg class="i12"><use href="#help"/></svg></button>
  </div>
  <div class="wc dark">
    <button aria-label="最小化部件"><svg class="i12"><use href="#min"/></svg></button><button aria-label="还原部件"><svg class="i12"><use href="#res"/></svg></button><button aria-label="关闭部件"><svg class="i12"><use href="#cls"/></svg></button>
  </div>
</nav>

<section class="ribbon">
  <div class="grp">
    <div class="body sk">
      <button class="big"><svg class="i24"><use href="#sketch"/></svg>草图</button>
      <div class="gal"><button aria-label="轮廓"><svg class="i18"><use href="#prof"/></svg></button><button aria-label="矩形"><svg class="i18"><use href="#rect"/></svg></button></div>
      <div class="spin"><button aria-label="上"><i class="dn upw"></i></button><button aria-label="下"><i class="dn"></i></button><button aria-label="更多曲线"><i class="dn bar"></i></button></div>
    </div>
    <footer><span>直接草图</span><i class="dn"></i></footer>
  </div>
  <div class="grp">
    <div class="body ft">
      <div class="col c1"><button><svg class="i12"><use href="#plane"/></svg>基准平面<i class="dn"></i></button><button><svg class="i12"><use href="#extr"/></svg>拉伸<i class="dn"></i></button><button><svg class="i12"><use href="#hole"/></svg>孔</button></div>
      <div class="col c2"><button><svg class="i12"><use href="#patt"/></svg>阵列特征</button><button><svg class="i12"><use href="#unite"/></svg>合并<i class="dn"></i></button><button><svg class="i12"><use href="#shell"/></svg>抽壳</button></div>
      <button class="big"><svg class="i24"><use href="#edge"/></svg>边倒圆<i class="dn"></i></button>
      <div class="col c3"><button aria-label="倒斜角"><svg class="i12"><use href="#chamf"/></svg></button><button aria-label="修剪体"><svg class="i12"><use href="#trim"/></svg></button><button aria-label="拔模"><svg class="i12"><use href="#draft"/></svg></button></div>
      <button class="big"><span class="frame"><svg class="i12"><use href="#more"/></svg></span>更多<i class="dn"></i></button>
    </div>
    <footer><span>特征</span><i class="dn"></i></footer>
  </div>
  <div class="grp">
    <div class="body sy">
      <button class="big"><svg class="i24"><use href="#move"/></svg>移动面</button>
      <div class="col c3"><button aria-label="替换面"><svg class="i12"><use href="#syn"/></svg></button><button aria-label="偏置区域"><svg class="i12"><use href="#syn"/></svg></button><button aria-label="删除面"><svg class="i12"><use href="#syn2"/></svg></button></div>
      <button class="big"><span class="frame"><svg class="i12"><use href="#cyc"/></svg></span>更多<i class="dn"></i></button>
    </div>
    <footer><span>同步建模</span><i class="dn"></i></footer>
  </div>
  <div class="grp">
    <div class="body"><button class="big"><svg class="i24"><use href="#surf"/></svg>曲面<i class="dn"></i></button></div>
  </div>
  <div class="grp">
    <div class="body mini">
      <div><button aria-label="属性工具"><svg class="i14"><use href="#nodes"/></svg></button><button aria-label="图层"><svg class="i14"><use href="#layers"/></svg></button><button aria-label="图层表"><svg class="i14"><use href="#sheet"/></svg></button><span class="vs"></span><button aria-label="标签"><svg class="i14"><use href="#tag"/></svg></button></div>
      <div><button aria-label="检查"><svg class="i14"><use href="#chk3"/></svg></button><button aria-label="检查二维"><svg class="i14"><use href="#chk4"/></svg></button><button aria-label="检查装配"><svg class="i14"><use href="#chk5"/></svg></button><span class="vs"></span><button aria-label="加工准备"><svg class="i14"><use href="#stamp"/></svg></button></div>
    </div>
    <footer><span>标准化工具 - G...</span><i class="dn"></i></footer>
  </div>
  <div class="grp">
    <div class="body mini">
      <div><button aria-label="柱齿轮"><svg class="i14"><use href="#gear"/></svg></button><button aria-label="锥齿轮"><svg class="i14"><use href="#gear"/></svg></button></div>
      <div><button aria-label="显示齿轮"><svg class="i14"><use href="#gearl"/></svg></button></div>
    </div>
    <footer><span>齿轮...</span><i class="dn"></i></footer>
  </div>
  <div class="grp">
    <div class="body mini">
      <div><button aria-label="圆柱压缩弹簧"><svg class="i14"><use href="#spr"/></svg></button><button aria-label="圆柱拉伸弹簧"><svg class="i14"><use href="#spr2"/></svg></button></div>
      <div><button aria-label="碟簧"><svg class="i14"><use href="#disc"/></svg></button><span class="vs"></span><button aria-label="删除弹簧"><svg class="i14"><use href="#spr3"/></svg></button></div>
    </div>
    <footer><span>弹簧...</span><i class="dn"></i></footer>
  </div>
  <div class="grp">
    <div class="body mini">
      <div><button aria-label="加工检查"><svg class="i14"><use href="#v"/></svg></button><button aria-label="加工配置"><svg class="i14"><use href="#cfg"/></svg></button></div>
      <div><button aria-label="工件"><svg class="i14"><use href="#map"/></svg></button><button aria-label="坐标系"><svg class="i14"><use href="#csys"/></svg></button></div>
    </div>
    <footer><span>加工...</span><i class="dn"></i></footer>
  </div>
  <div class="grp">
    <div class="body mini">
      <div><button aria-label="三角"><svg class="i14"><use href="#tri"/></svg></button><button aria-label="表格"><svg class="i14"><use href="#tbl"/></svg></button><button aria-label="注释"><svg class="i14"><use href="#note"/></svg></button><button aria-label="编辑注释"><svg class="i14"><use href="#note2"/></svg></button></div>
      <div><button aria-label="图框"><svg class="i14"><use href="#box"/></svg></button><button aria-label="尺寸"><svg class="i14"><use href="#dimx"/></svg></button><span class="vs"></span><button aria-label="公差查询"><svg class="i14"><use href="#h7"/></svg></button></div>
    </div>
    <footer><span>建模工具 - G...</span><i class="dn"></i></footer>
  </div>
  <div class="grp">
    <div class="body mini one">
      <div><button aria-label="部件一"><svg class="i14"><use href="#gold"/></svg></button></div>
      <div><button aria-label="部件二"><svg class="i14"><use href="#gold"/></svg></button></div>
    </div>
    <footer><span>P..</span><i class="dn"></i></footer>
  </div>
  <div class="grp">
    <div class="body mini one">
      <div><button aria-label="尺寸格式"><svg class="i14"><use href="#dstep"/></svg></button><span class="sp"></span><button class="dim">1.00</button><button class="dim">1.00<em>±.05</em></button><button class="dim">1.00<em>+.00</em><em>-.03</em></button><button class="dim">1.00<em>+.00</em><em>-.05</em></button><button class="dim">1.00<em>+.05</em><em>-.03</em></button><button class="dim"><span class="bx">1.00</span></button><button class="dim"><em>(1.00)</em></button><button class="dim blue">10H7</button><button class="dim blue">10H7<span>(g⁺⁰¹)</span></button><button class="dim blue">10H7<span>[g⁰⁰]</span></button><button class="dim blue">10<span>[g⁰⁰¹]</span></button></div>
      <div><button aria-label="坐标尺寸"><svg class="i14"><use href="#dred"/></svg></button><button aria-label="引线"><svg class="i14"><use href="#dred2"/></svg></button><span class="vs"></span><button aria-label="半径"><svg class="i14"><use href="#dia"/></svg></button><button aria-label="直径"><svg class="i14"><use href="#dia"/></svg></button><button aria-label="恢复"><svg class="i12"><use href="#ret"/></svg></button></div>
    </div>
    <footer><span>尺寸快速格式化工具 - GC工具箱</span><i class="dn"></i></footer>
  </div>
  <div class="grp">
    <div class="body as">
      <div class="pair"><button aria-label="查找组件"><svg class="i18"><use href="#fade"/></svg></button><button aria-label="添加组件"><svg class="i18"><use href="#addc"/></svg><i class="dn"></i></button></div>
      <div class="col c3"><button aria-label="装配约束"><svg class="i12"><use href="#mirr"/></svg></button><button aria-label="移动组件"><svg class="i12"><use href="#gmov"/></svg></button><button aria-label="阵列组件"><svg class="i12"><use href="#gadd"/></svg></button></div>
    </div>
    <footer><span>装配</span><i class="dn"></i></footer>
  </div>
  <div class="grp last"><div class="body"></div><footer><span></span><i class="dn"></i></footer></div>
</section>

<section class="selbar">
  <button class="menu"><svg class="i12"><use href="#menu"/></svg><span>菜单(<u>M</u>)</span><i class="dn"></i></button><span class="vs"></span>
  <span class="sel s1"><select aria-label="类型过滤器"><option>没有选择过滤器</option></select></span>
  <span class="sel s2"><select aria-label="选择范围"><option>整个装配</option></select></span>
  <div class="strip">
    <button aria-label="选择一"><svg class="i12"><use href="#gh1"/></svg></button><button aria-label="选择二"><svg class="i12"><use href="#gh2"/></svg></button><button aria-label="常规过滤器"><svg class="i12"><use href="#flt"/></svg></button><button class="dd" aria-label="过滤器列表"><i class="dn"></i></button><button aria-label="选择三"><svg class="i12"><use href="#gh3"/></svg></button><button aria-label="选择四"><svg class="i12"><use href="#gh2"/></svg></button><button aria-label="矩形选择"><svg class="i12"><use href="#dash"/></svg></button><button class="dd" aria-label="选择方式"><i class="dn"></i></button><button aria-label="着色选择"><svg class="i12"><use href="#shade"/></svg></button><button aria-label="实体"><svg class="i12"><use href="#bcube"/></svg></button>
  </div>
  <div class="strip snaps">
    <button class="on" aria-label="启用捕捉点"><svg class="i14"><use href="#snap"/></svg></button><button class="on" aria-label="端点"><svg class="i12"><use href="#ln1"/></svg></button><button class="on" aria-label="中点"><svg class="i12"><use href="#ln2"/></svg></button><button aria-label="控制点"><svg class="i12"><use href="#crv"/></svg></button><button class="on" aria-label="极点"><svg class="i12"><use href="#zig"/></svg></button><button aria-label="交点"><svg class="i12"><use href="#int"/></svg></button><button class="on" aria-label="圆心"><svg class="i12"><use href="#cen"/></svg></button><button aria-label="象限点"><svg class="i12"><use href="#quad"/></svg></button><button class="on" aria-label="现有点"><svg class="i12"><use href="#plus"/></svg></button><button class="on" aria-label="曲线上的点"><svg class="i12"><use href="#ln2"/></svg></button><button aria-label="面上的点"><svg class="i12"><use href="#ball"/></svg></button><button aria-label="栅格点"><svg class="i12"><use href="#grid"/></svg></button>
  </div>
  <span class="vs"></span>
  <div class="strip viewops">
    <button aria-label="适合窗口"><svg class="i12"><use href="#fit"/></svg></button><button aria-label="平移"><svg class="i12"><use href="#hand"/></svg></button><button aria-label="旋转"><svg class="i12"><use href="#rot"/></svg></button><button aria-label="布局"><svg class="i12"><use href="#lay"/></svg></button><button class="dd" aria-label="布局列表"><i class="dn"></i></button><button aria-label="渲染"><svg class="i12"><use href="#wing"/></svg></button><button class="dd" aria-label="渲染列表"><i class="dn"></i></button><button aria-label="着色"><svg class="i12"><use href="#cube"/></svg></button><button class="dd" aria-label="着色列表"><i class="dn"></i></button><button aria-label="动画"><svg class="i12"><use href="#play"/></svg></button><button class="dd" aria-label="动画列表"><i class="dn"></i></button>
  </div>
  <span class="vs"></span>
  <i class="dn end"></i>
</section>

<main>
  <nav class="rail">
    <button class="cog" aria-label="资源条选项"><svg class="i12"><use href="#cog"/></svg></button>
    <button aria-label="装配导航器"><svg class="i18"><use href="#asm"/></svg></button>
    <button aria-label="约束导航器"><svg class="i18"><use href="#mirr"/></svg></button>
    <button class="on" aria-label="部件导航器"><svg class="i18"><use href="#nav"/></svg></button>
    <button class="gap" aria-label="重用库"><svg class="i18"><use href="#books"/></svg></button>
    <button class="gap" aria-label="HD3D 工具"><svg class="i18"><use href="#info"/></svg></button>
    <button class="gap" aria-label="Web 浏览器"><svg class="i18"><use href="#html"/></svg></button>
    <button aria-label="历史记录"><svg class="i18"><use href="#clock"/></svg></button>
    <button aria-label="系统材料"><svg class="i18"><use href="#rain"/></svg></button>
    <button class="short" aria-label="角色"><svg class="i18"><use href="#role"/></svg></button>
    <svg class="wave" viewBox="0 0 22 6"><path d="M1 1c5 5 9 2 11 1s6-1 9 1" fill="none" stroke="#8a8a8a" stroke-width="1.300"/></svg>
    <button class="sc" aria-label="首页"><i class="dn upw bar"></i></button><button class="sc" aria-label="上移"><i class="dn upw"></i></button><button class="sc" aria-label="下移"><i class="dn"></i></button><button class="sc" aria-label="末页"><i class="dn bar"></i></button>
  </nav>

  <aside class="panel">
    <div class="ptitle"><h2>部件导航器</h2><button aria-label="最大化"></button></div>
    <div class="tree">
      <table>
        <colgroup><col><col class="w2"><col class="w3"></colgroup>
        <thead><tr><th>名称<i class="sort"></i></th><th>最新</th><th>附</th></tr></thead>
        <tbody>
          <tr><td><div class="n top"><span class="tg"></span><svg class="i12"><use href="#clock"/></svg>历史记录模式</div></td><td></td><td></td></tr>
          <tr><td><div class="n top"><button class="tg" aria-label="展开">+</button><svg class="i12"><use href="#views"/></svg>模型视图</div></td><td></td><td></td></tr>
          <tr><td><div class="n top"><button class="tg" aria-label="展开">+</button><svg class="i12"><use href="#tick"/></svg><svg class="i12"><use href="#cam"/></svg>摄像机</div></td><td></td><td></td></tr>
          <tr><td><div class="n"><button class="tg" aria-label="折叠">−</button><svg class="i12"><use href="#fold"/></svg>模型历史记录</div></td><td></td><td></td></tr>
          <tr><td><label class="n kid"><input type="checkbox" checked><svg class="i12"><use href="#csys"/></svg>基准坐标系 (0)</label></td><td><svg class="i12"><use href="#tick"/></svg></td><td></td></tr>
          <tr><td><label class="n kid"><input type="checkbox" checked><svg class="i12"><use href="#cube"/></svg>块 (1)</label></td><td><svg class="i12"><use href="#tick"/></svg></td><td></td></tr>
          <tr><td><label class="n kid"><input type="checkbox" checked><svg class="i12"><use href="#shell"/></svg>抽壳 (2)</label></td><td><svg class="i12"><use href="#tick"/></svg></td><td></td></tr>
          <tr><td><label class="n kid"><input type="checkbox" checked><svg class="i12"><use href="#trim"/></svg><b>修剪体 (3)</b></label></td><td><svg class="i12"><use href="#tick"/></svg></td><td></td></tr>
          <tr><td></td><td></td><td></td></tr><tr><td></td><td></td><td></td></tr><tr><td></td><td></td><td></td></tr><tr><td></td><td></td><td></td></tr><tr><td></td><td></td><td></td></tr><tr><td></td><td></td><td></td></tr><tr><td></td><td></td><td></td></tr><tr><td></td><td></td><td></td></tr><tr><td></td><td></td><td></td></tr><tr><td></td><td></td><td></td></tr><tr><td></td><td></td><td></td></tr>
        </tbody>
      </table>
    </div>
    <div class="hbar"><i class="dn lf"></i><div class="track"><div class="thumb"></div></div><i class="dn rt"></i></div>
    <button class="acc">相依性<svg class="i12"><use href="#chev"/></svg></button>
    <button class="acc">细节<svg class="i12"><use href="#chev"/></svg></button>
    <button class="acc">预览<svg class="i12"><use href="#chev"/></svg></button>
  </aside>

  <div class="view">
    <svg viewBox="267 132 733 385" preserveAspectRatio="xMinYMin meet" role="img" aria-label="模型视图">
      <g stroke="#4a3a20" stroke-width=".8" stroke-linejoin="round">
        <path d="M457 197L584 168L846 276L719 305z" fill="#ffbc00"/>
        <path d="M457 197L719 305L723 452L460 345z" fill="#b56d00"/>
        <path d="M719 305L846 276L850 423L723 452z" fill="#d98300"/>
        <path d="M466 216L582 263L583 308L469 333z" fill="#d98300"/>
        <path d="M582 263L711 316L712 360L583 308z" fill="#b56d00"/>
        <path d="M469 333L583 308L712 360L714 434z" fill="#ffbc00"/>
      </g>
      <g fill="none" stroke="#d0388a" stroke-width="1.200"><circle cx="590" cy="325" r="4.800"/><circle cx="590" cy="325" r="2.200"/></g>
      <g fill="none" stroke="#4a48e8" stroke-width="1"><path d="M331 288L333 374L361 385L385 395M333 374L373 364L408 356M333 327L372 318L373 364L401 376L361 385L360 338L333 327M329 374h8M333 370v7"/></g>
      <path d="M331 281l3 11h-5zM413 355l-11 1 1 5zM389 397l-9-6-2 4z" fill="#1010c8"/>
      <g class="ax" fill="#2a2ae0"><text x="328" y="279">Z</text><text x="415" y="358">Y</text><text x="388" y="401">X</text></g>
      <path d="M300 468l11-3 8 3v12l-8 3-11-2z" fill="#cfd1d1" stroke="#a9acac"/><path d="M300 468l10 2 9-2M310 470v13M311 465v12" fill="none" stroke="#a9acac"/>
      <path d="M301 480l18-4" stroke="#7bb07f"/>
      <path d="M300 480v-14" stroke="#1238d0" stroke-width="1.600"/><path d="M300 459l2.500 7h-5z" fill="#1238d0"/>
      <path d="M301 482l8 3" stroke="#c01818" stroke-width="1.600"/><path d="M314 486l-6 .5 1-4z" fill="#c01818"/>
      <circle cx="300" cy="481" r="2.800" fill="#c4c4c4" stroke="#777" stroke-width=".6"/>
      <g class="ax"><text x="297" y="459" fill="#3b55e0">Z</text><text x="319" y="479" fill="#4da355">Y</text><text x="313" y="491" fill="#d23a3a">X</text></g>
      <g class="wm">
        <text x="767" y="491" class="wb">Bai</text>
        <ellipse cx="835" cy="457" rx="7" ry="9"/><ellipse cx="848" cy="444" rx="6" ry="9"/><ellipse cx="864" cy="445" rx="7" ry="9"/><ellipse cx="874" cy="460" rx="7" ry="9"/>
        <path d="M854 458c7 0 9 7 14 12s9 8 7 14-7 8-12 7c-6-2-11-2-17 0-6 1-12-1-13-7s3-10 8-14 6-12 13-12z"/>
        <text x="841" y="486" class="wd">du</text>
        <text x="881" y="488" class="wz">经验</text>
        <text x="768" y="512" class="wu">jingyan.baidu.com</text>
      </g>
    </svg>
    <div class="meter"><span></span></div>
  </div>
</main>

<footer class="status"><span>拖动光标以绕 X-Y 旋转视图</span><div><button class="hz" aria-label="显示"><svg class="i12"><use href="#gh1"/></svg></button><button aria-label="全屏显示"><svg class="i12"><use href="#full"/></svg></button></div></footer>
<div class="taskbar">
  <svg viewBox="0 0 450 9" class="tb"><g>
    <ellipse cx="20" cy="11" rx="13" ry="9" fill="#4f6f94"/><circle cx="19" cy="9" r="5" fill="#d9542c"/>
    <path d="M60 10c2-6 12-6 14 0" fill="none" stroke="#2a6fb5" stroke-width="2"/><path d="M61 8c5-6 13-6 15-3" fill="none" stroke="#e7b93a" stroke-width="1.500"/>
    <path d="M89 10V1h43v9M180 10V1h42v9M316 10V1h43v9M362 10V1h42v9M407 10V1h42v9" fill="#dfe8f4" stroke="#5b6c83"/>
    <path d="M100 5h5l1-1h15v6h-21z" fill="#f3de96"/><path d="M106 5h3v2h-3z" fill="#2b9c38"/><path d="M110 5h3v2h-3z" fill="#e03a30"/>
    <path d="M146 6h18v4h-18z" fill="#8dc3e4"/><circle cx="201" cy="13" r="10" fill="#1586ee"/>
    <path d="M238 5h15v5h-15z" fill="#f0f2f4"/><path d="M238 4h15v2h-15z" fill="#efa23d"/>
    <path d="M281 4h22v6h-22z" fill="#12a8f4"/><path d="M284 6h4v4h-4zM290 6h10v4h-10z" fill="#fff"/>
    <path d="M327 4h11v6z" fill="#cf2848"/><path d="M338 4l9 6h-8z" fill="#45a85a"/>
    <path d="M371 10c0-5 1-7 4-7h8v7z" fill="#f5bd13"/><path d="M383 3h9c3 0 3 3 3 7h-12z" fill="#7ce02c"/><path d="M376 5v4M383 5v4M390 5v4" stroke="#fff" stroke-width="1.500"/>
    <path d="M423 10c3-6 12-6 14-2" fill="none" stroke="#75aeca" stroke-width="1.500"/><circle cx="437" cy="6" r="3" fill="#c09263"/>
  </g></svg>
  <time>上午 11:07</time><button class="desk" aria-label="显示桌面"></button>
</div>
</body>
</html>
```

FILE: styles.css
```css
* { box-sizing: border-box; }
html, body { height: 100%; margin: 0; }
body {
  display: flex;
  flex-direction: column;
  overflow: hidden;
  background: #fff;
  color: #333;
  font: 8px/12px "Noto Sans", "Noto Sans CJK SC", sans-serif;
}
button {
  display: flex;
  align-items: center;
  justify-content: center;
  margin: 0;
  padding: 0;
  border: 0;
  background: none;
  color: inherit;
  font: inherit;
  white-space: nowrap;
}
h1, h2 { margin: 0; font-weight: 400; }
svg { display: block; flex: none; }
.sprite { position: absolute; width: 0; height: 0; }
.i12 { width: 12px; height: 12px; }
.i14 { width: 13px; height: 13px; }
.i18 { width: 18px; height: 18px; }
.i24 { width: 24px; height: 24px; }

.dn {
  display: block;
  flex: none;
  width: 4px;
  height: 3px;
  border: solid transparent;
  border-width: 3px 2px 0;
  border-top-color: #222;
}
.dn.upw { border-width: 0 2px 3px; border-bottom-color: #999; }
.dn.lf { border-width: 2px 3px 2px 0; border-color: transparent #333; width: 3px; height: 4px; }
.dn.rt { border-width: 2px 0 2px 3px; border-color: transparent #333; width: 3px; height: 4px; }
.dn.bar { box-shadow: 0 -2px 0 -1px #fff, 0 -3px 0 -1px #333; }
.dn.upw.bar { box-shadow: 0 3px 0 -1px #aaa; }
.vs { flex: none; width: 1px; height: 14px; background: #dcdcdc; }
.dd { width: 8px; }

/* title bar */
.titlebar {
  display: flex;
  flex: none;
  align-items: center;
  height: 19px;
  background: linear-gradient(#bdbdbd, #fff) right 73px top / 240px 3px no-repeat;
}
.logo { width: 31px; padding-left: 3px; border-right: 1px solid #ddd; color: #8299ad; font: bold 16px/16px "Liberation Sans", sans-serif; }
.quick { display: flex; align-items: center; height: 19px; padding-left: 4px; }
.quick button { width: 17px; height: 18px; }
.quick .dd { width: 8px; }
.quick .wide { width: 42px; gap: 3px; margin: 0 4px 0 3px; }
h1 { flex: 1; padding-left: 12px; color: #333; font-size: 10px; line-height: 19px; text-align: center; white-space: nowrap; }
.brand { color: #099; font-size: 10px; font-weight: 700; }
.wc { display: flex; width: 66px; padding-left: 13px; color: #666; }
.wc button { width: 17px; height: 16px; }
.wc.dark { width: 49px; padding: 0; color: #222; }
.wc .i12 { width: 11px; height: 11px; }

/* tabs */
.tabs { display: flex; flex: none; align-items: center; height: 20px; background: #c8d8d6; }
.tabs > button { width: 38px; height: 20px; font-size: 10px; }
.tabs > .file { width: 60px; background: #578a7f; color: #fff; }
.tabs > .on { background: #fff; color: #2f8fc0; }
.tabs > .long { width: 58px; }
.search { display: flex; align-items: center; width: 91px; height: 14px; margin-left: auto; padding-right: 2px; border: 1px solid #aebdbb; background: #fff; }
.search input { flex: 1; min-width: 0; height: 12px; padding: 0 1px; border: 0; outline: 0; background: none; font: inherit; }
.search input::placeholder { color: #999; }
.tools { display: flex; margin-left: 4px; }
.tools button { width: 19px; height: 16px; }
.tools + .wc { margin-left: 1px; }

/* ribbon */
.ribbon {
  display: grid;
  flex: none;
  grid-template-columns: 82px 207px 90px 32px 76px 38px 43px 38px 71px 22px 210px 62px 1fr;
  height: 70px;
  border-bottom: 2px solid #eaeaea;
}
.grp { display: flex; flex-direction: column; min-width: 0; margin: 3px 0; border-right: 1px solid #dcdcdc; }
.grp.last { border: 0; }
.body { display: flex; flex: 1; min-height: 0; }
.grp footer { display: flex; align-items: center; height: 12px; padding-right: 5px; color: #3189b6; white-space: nowrap; }
.grp footer span { flex: 1; overflow: hidden; text-align: center; }
.big { flex-direction: column; justify-content: flex-start; line-height: 12px; padding-top: 2px; }
.big .dn { margin-top: 4px; }
.frame { display: grid; place-items: center; width: 27px; height: 24px; border: 1px solid #eee; border-radius: 2px; }
.sk { padding-left: 9px; gap: 8px; }
.gal { display: flex; flex-direction: column; justify-content: space-around; align-items: center; width: 24px; height: 49px; border: 1px solid #ddd; }
.spin { display: flex; flex-direction: column; width: 6px; padding-top: 1px; }
.spin button { height: 16px; }
.sk .spin { margin-left: -4px; }
.col { display: flex; flex-direction: column; }
.col button { justify-content: flex-start; height: 16px; gap: 3px; }
.col .dn { margin-left: 3px; }
.ft { padding-left: 8px; }
.c1 { width: 62px; }
.c2 { width: 51px; }
.c3 { width: 21px; padding-left: 6px; }
.sy { padding-left: 7px; }
.sy .c3 { width: 27px; }
.ft .big, .sy .big { width: 27px; }
.ft .col.c3 { width: 26px; padding-left: 5px; }
.grp > .body > .big:only-child { width: 31px; }
.mini { flex-direction: column; padding: 2px 0 0 3px; }
.mini.one { padding-left: 1px; }
.mini div { display: flex; align-items: center; height: 22px; }
.mini button { width: 17px; height: 20px; }
.mini .vs { height: 14px; margin: 0 2px 0 1px; }
.mini .sp { width: 4px; }
.mini .dim { flex-direction: column; color: #333; font-size: 5px; line-height: 5px; font-weight: 600; }
.dim em { color: #c2413c; font-style: normal; }
.dim .bx { padding: 1px 0; border: 1px solid #c2413c; }
.mini .dim.blue { color: #4741b8; }
.as { padding-left: 6px; }
.pair { width: 34px; padding-top: 3px; }
.pair button { gap: 6px; height: 22px; margin-left: 1px; }

/* selection bar */
.selbar { display: flex; flex: none; align-items: center; height: 23px; border-bottom: 1px solid #929a9a; }
.selbar > .vs { height: 18px; }
.menu { width: 63px; gap: 3px; padding-left: 3px; }
.sel { position: relative; height: 15px; border: 1px solid #a5a5a5; }
.s1 { width: 98px; margin-left: 8px; }
.s2 { width: 103px; margin-left: 5px; }
.sel select { width: 100%; height: 13px; padding: 0 2px; border: 0; appearance: none; background: #fff; color: #222; font: 8px/12px "Noto Sans", "Noto Sans CJK SC", sans-serif; }
.sel::after { content: ""; position: absolute; right: 4px; top: 5px; border: solid transparent; border-width: 4px 3px 0; border-top-color: #222; }
.strip { display: flex; align-items: center; margin-left: 3px; }
.strip button { width: 18px; height: 17px; }
.strip .dd { width: 8px; }
.snaps .on { border: 1px solid #b4c8c5; background: #c8d8d6; }
.snaps { margin-right: 8px; }
.viewops { margin: 0 4px; }
.viewops .dd { width: 9px; }
.selbar .end { margin: 8px 5px 0 auto; }

/* resource rail */
main { display: flex; flex: 1; min-height: 0; }
.rail { display: flex; flex: none; flex-direction: column; width: 24px; border-right: 1px solid #c8c8c8; background: #dcdcdc; }
.rail button { flex: none; height: 31px; padding-left: 2px; }
.rail .i18 { width: 17px; height: 17px; }
.rail .cog { height: 20px; margin-bottom: 10px; padding: 0; }
.rail .on { margin: 0 -1px 0 1px; border: 1px solid #c4c4c4; border-right: 0; background: #fff; }
.rail .gap { margin-bottom: 8px; }
.rail .short { height: 26px; }
.rail .sc { height: 12px; padding: 0; }
.rail .sc .dn.bar:not(.upw) { box-shadow: 0 -3px 0 -1px #333; }
.wave { width: 22px; height: 6px; }

/* part navigator */
.panel { display: flex; flex: none; flex-direction: column; width: 243px; padding: 0 7px 4px 4px; border-right: 1px solid #a9b1b1; }
.ptitle { display: flex; align-items: center; justify-content: space-between; height: 21px; padding: 0 5px 0 3px; color: #222; }
.ptitle h2 { font-size: 9px; }
.ptitle button { width: 9px; height: 8px; border: 1px solid #333; border-top-width: 2px; }
.tree { flex: 1; min-height: 0; overflow: hidden; border: 1px solid #d0d0d0; border-width: 1px 1px 0; }
table { width: 100%; border-collapse: collapse; table-layout: fixed; font-size: 9px; line-height: 12px; }
.w2 { width: 73px; }
.w3 { width: 10px; }
th { height: 15px; padding: 0 4px; overflow: hidden; border-right: 1px solid #d4d4d4; background: #ececec; font-weight: 400; text-align: left; white-space: nowrap; }
th:last-child { padding: 0 0 0 3px; }
.sort { display: inline-block; margin-left: 14px; border: solid transparent; border-width: 0 4px 4px; border-bottom-color: #222; vertical-align: 1px; }
td { height: 15px; padding: 0; border: solid #ececec; border-width: 0 1px 1px 0; }
tbody tr:nth-child(3n) td { height: 14px; }
tbody tr:nth-child(even) { background: #f8f8f8; }
td + td { padding-left: 3px; }
.n { position: relative; display: flex; align-items: center; height: 13px; gap: 1px; padding-left: 3px; white-space: nowrap; }
.tg { width: 9px; height: 9px; margin-right: 1px; color: #333; font-size: 9px; line-height: 9px; }
button.tg { z-index: 1; background: #f4f4f4; }
.top::before { content: ""; position: absolute; left: 7px; top: 7px; height: 14px; border-left: 1px dotted #bbb; }
.kid { padding-left: 29px; }
.kid::before { content: ""; position: absolute; left: 21px; top: -7px; width: 7px; height: 14px; border: dotted #bbb; border-width: 0 0 1px 1px; }
.kid input {
  width: 10px;
  height: 10px;
  margin: 0 1px 0 0;
  appearance: none;
  border: 1px solid #222;
  background: #fff url("data:image/svg+xml,%3Csvg xmlns='http://www.w3.org/2000/svg' viewBox='0 0 10 10'%3E%3Cpath d='M1 5l3 4 5-8' fill='none' stroke='%231fae2f' stroke-width='2.200'/%3E%3C/svg%3E") center / 8px 8px no-repeat;
}
.hbar { display: flex; flex: none; align-items: center; height: 17px; padding: 0 5px 2px; border: 1px solid #d0d0d0; border-top: 0; border-bottom: 3px solid #c9c9c9; background: #f0f0f0; }
.track { flex: 1; padding: 0 51px 0 6px; }
.thumb { height: 11px; border: 1px solid #9c9c9c; border-radius: 1px; background: repeating-linear-gradient(90deg, #666 0 1px, transparent 1px 2px) center / 6px 5px no-repeat, linear-gradient(#f4f4f4, #d2d2d2); }
.acc { flex: none; justify-content: space-between; height: 18px; padding: 1px 3px 0 5px; border-bottom: 1px solid #cdcdcd; color: #2f8fc0; font-size: 11px; line-height: 16px; }
.acc .i12 { width: 10px; height: 10px; }

/* graphics view */
.view { position: relative; flex: 1; min-width: 0; overflow: hidden; background: linear-gradient(#b3b5b7 0, #cbccce 33%, #e5e6e8 75%, #e6e7e9 100%); }
.view > svg { width: 100%; height: 100%; }
.ax { font: 9px "Liberation Sans", sans-serif; }
.wm { fill: #f9f9f9; stroke: #cbcccd; stroke-width: 2; paint-order: stroke; }
.wb { font: bold 40px "Liberation Sans", sans-serif; }
.wd { fill: #d0d1d2; stroke: none; font: bold 24px "Liberation Sans", sans-serif; }
.wz { font: 900 31px "Noto Sans CJK SC", sans-serif; }
.wu { font: 500 20px "Noto Sans", sans-serif; stroke-width: 1; }
.meter { position: absolute; top: 69px; right: 0; width: 7px; height: 44px; padding: 13px 1px 4px 3px; border-radius: 3px 0 0 3px; background: #454a5b; }
.meter span { display: block; height: 100%; background: repeating-linear-gradient(#0000 0 1px, #454a5b 1px 2px), linear-gradient(#c9a04c, #a9b859, #46b89b); }

/* status and taskbar */
.status { display: flex; flex: none; align-items: center; justify-content: space-between; height: 16px; padding: 0 40px 0 2px; border-top: 1px solid #c0c4c4; color: #111; font-weight: 500; }
.status div { display: flex; gap: 4px; }
.status .hz { background: #e2e2e2; }
.taskbar { display: flex; flex: none; height: 9px; overflow: hidden; border-top: 1px solid #5d6f84; background: linear-gradient(90deg, #a4bedb 0 68%, #7d93ae 72%); color: #fff; }
.tb { width: 450px; height: 9px; }
.taskbar time { margin: 2px 22px 0 auto; font-size: 9px; line-height: 12px; }
.desk { width: 10px; height: 9px; border: 1px solid #46566a; background: #8296aa; }
```
